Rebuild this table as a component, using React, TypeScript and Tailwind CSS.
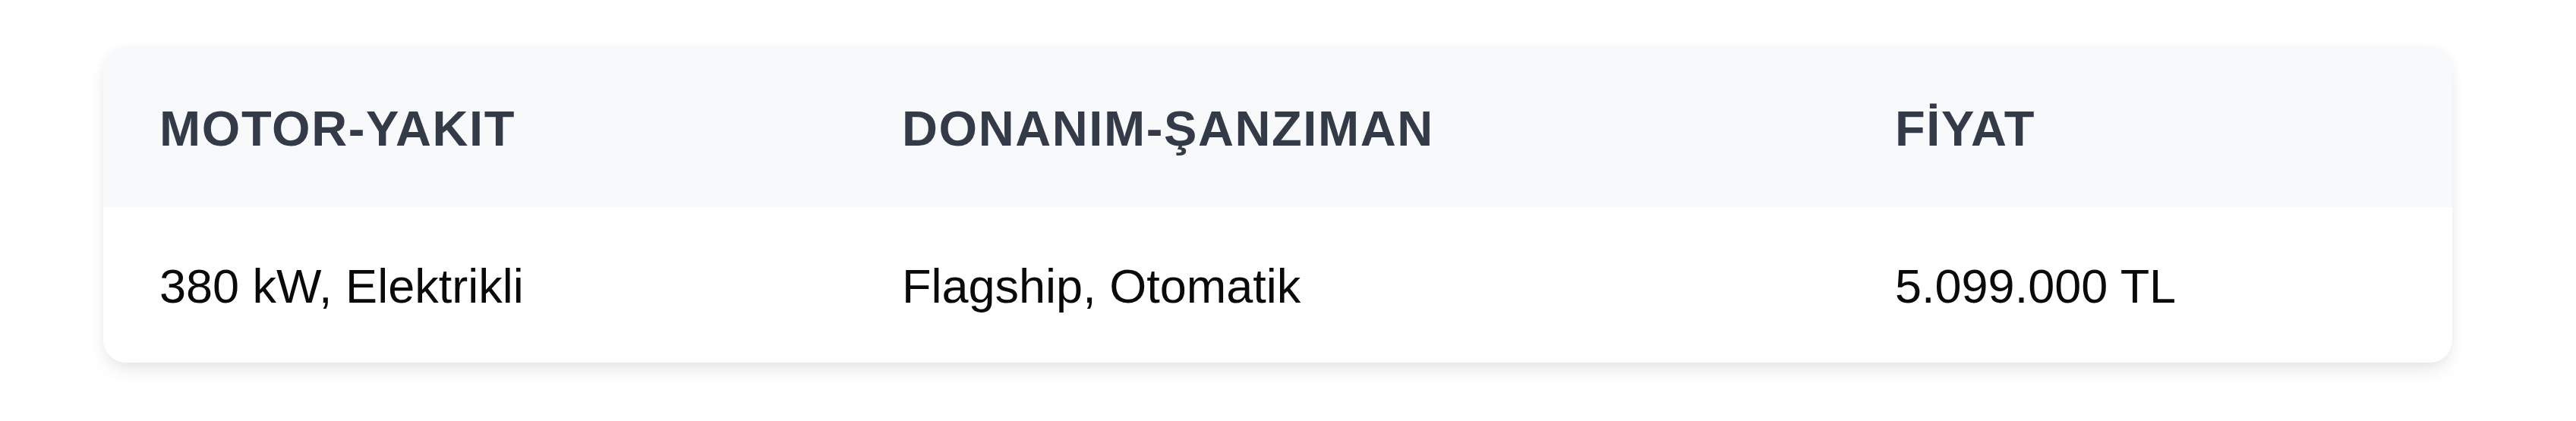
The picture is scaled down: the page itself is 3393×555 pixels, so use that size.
const COLUMNS = ["MOTOR-YAKIT", "DONANIM-ŞANZIMAN", "FİYAT"];
const ROWS = [["380 kW, Elektrikli", "Flagship, Otomatik", "5.099.000 TL"]];

export default function App() {
  return (
    <div className="min-h-screen w-full bg-white pt-[62px] pl-[136px] font-['Liberation_Sans',Arial,sans-serif]">
      <div className="w-[3094px] overflow-hidden rounded-[30px] bg-white shadow-[0_14px_26px_-6px_rgba(0,0,0,0.10),0_0_14px_rgba(0,0,0,0.04)]">
        {/* Header */}
        <div className="grid h-[211px] grid-cols-[978px_1308px_1fr] bg-[#f8f9fa]">
          {COLUMNS.map((c) => (
            <div key={c} className="flex items-center pl-[74px] pt-[4px]">
              <span className="text-[65px] font-bold leading-none tracking-[1.6px] text-[#343b48]">{c}</span>
            </div>
          ))}
        </div>

        {/* Body */}
        {ROWS.map((r, i) => (
          <div key={i} className="grid h-[205px] grid-cols-[978px_1308px_1fr] bg-white">
            {r.map((v, j) => (
              <div key={j} className="flex items-center pl-[74px] pt-[4px]">
                <span className="text-[63px] leading-none text-[#0a0a0a]">{v}</span>
              </div>
            ))}
          </div>
        ))}
      </div>
    </div>
  );
}
